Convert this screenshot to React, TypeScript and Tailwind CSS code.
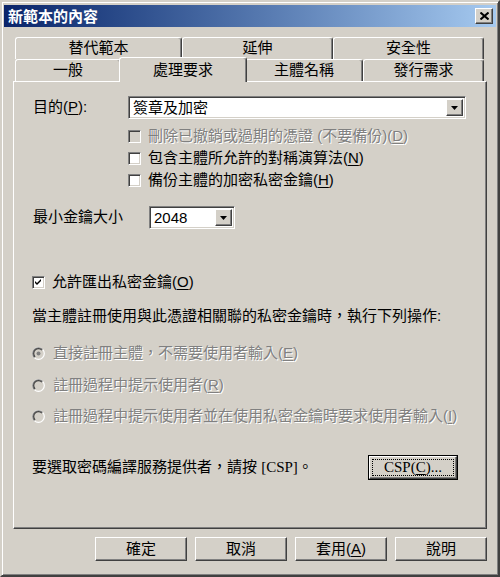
import React from "react";

const raised =
  "border border-t-white border-l-white border-r-[#404040] border-b-[#404040] shadow-[inset_-1px_-1px_#808080]";
const sunken =
  "border border-t-[#808080] border-l-[#808080] border-r-white border-b-white shadow-[inset_1px_1px_#404040,inset_-1px_-1px_#d4d0c8]";
const grayText = "text-[#808080] [text-shadow:1px_1px_0_#ffffff]";

function U({ children }: { children: React.ReactNode }) {
  return <span className="underline underline-offset-2">{children}</span>;
}

function CheckBox({ checked = false, disabled = false }: { checked?: boolean; disabled?: boolean }) {
  return (
    <span
      className={`w-[13px] h-[13px] shrink-0 flex items-center justify-center ${sunken} ${
        disabled ? "bg-[#d4d0c8]" : "bg-white"
      }`}
    >
      {checked && (
        <svg width="7" height="7" viewBox="0 0 7 7">
          <path d="M0 2 L2 4 L6 0 L6 2 L2 6 L0 4 Z" fill="#000" />
        </svg>
      )}
    </span>
  );
}

function Radio({ selected = false }: { selected?: boolean }) {
  return (
    <svg width="13" height="13" viewBox="0 0 13 13" className="shrink-0">
      <circle cx="6.5" cy="6.5" r="5.8" fill="#d4d0c8" stroke="#ffffff" strokeWidth="1.2" />
      <path d="M2.4 10.6 A5.8 5.8 0 0 1 10.6 2.4" fill="none" stroke="#808080" strokeWidth="1.2" />
      <path d="M3.1 9.9 A4.8 4.8 0 0 1 9.9 3.1" fill="none" stroke="#404040" strokeWidth="1.2" />
      {selected && <circle cx="6.5" cy="6.5" r="2" fill="#808080" />}
    </svg>
  );
}

function DropArrow() {
  return (
    <span className={`w-[17px] h-full bg-[#d4d0c8] flex items-center justify-center ${raised}`}>
      <svg width="7" height="4" viewBox="0 0 7 4">
        <path d="M0 0 H7 L3.5 4 Z" fill="#000" />
      </svg>
    </span>
  );
}

function Combo({ value, width }: { value: string; width: string }) {
  return (
    <div className={`${width} h-[23px] bg-white flex items-stretch p-[2px] ${sunken}`}>
      <span className="flex-1 pl-[2px] leading-[17px] text-[15px]">{value}</span>
      <DropArrow />
    </div>
  );
}

function Tab({ label, w, selected = false }: { label: string; w: string; selected?: boolean }) {
  return (
    <div
      className={`${w} ${
        selected ? "h-[25px] -mt-[2px] -mx-[2px] relative z-10 border-b-0" : "h-[22px]"
      } bg-[#d4d0c8] border-t border-l border-t-white border-l-white border-r border-r-[#404040] rounded-t-[3px] shadow-[inset_-1px_0_#808080] flex items-center justify-center text-[15px] shrink-0`}
    >
      {label}
    </div>
  );
}

function Button({ label }: { label: React.ReactNode }) {
  return (
    <button className={`w-[92px] h-[24px] bg-[#d4d0c8] text-[15px] flex items-center justify-center ${raised}`}>
      {label}
    </button>
  );
}

export default function App() {
  return (
    <div className="w-[500px] h-[577px] bg-[#d4d0c8] border-2 border-t-[#d4d0c8] border-l-[#d4d0c8] border-r-[#404040] border-b-[#404040] shadow-[inset_1px_1px_#fff,inset_-1px_-1px_#808080] p-[2px] pt-[3px] font-['Liberation_Sans','Noto_Sans_CJK_TC',sans-serif] text-black flex flex-col overflow-hidden">
      {/* title bar */}
      <div className="h-[22px] bg-gradient-to-r from-[#0a246a] to-[#a6caf0] flex items-center justify-between pl-[4px] pr-[3px]">
        <span className="text-white font-bold text-[15px] leading-none">新範本的內容</span>
        <span className={`w-[18px] h-[16px] bg-[#d4d0c8] flex items-center justify-center ${raised}`}>
          <svg width="9" height="8" viewBox="0 0 9 8">
            <path d="M0.5 0.5 L8.5 7.5 M8.5 0.5 L0.5 7.5" stroke="#000" strokeWidth="2" />
          </svg>
        </span>
      </div>

      {/* tabs */}
      <div className="mt-[10px] pl-[11px] flex flex-col">
        <div className="flex">
          <Tab label="替代範本" w="w-[167px]" />
          <Tab label="延伸" w="w-[151px]" />
          <Tab label="安全性" w="w-[151px]" />
        </div>
        <div className="flex">
          <Tab label="一般" w="w-[106px]" />
          <Tab label="處理要求" w="w-[128px]" selected />
          <Tab label="主體名稱" w="w-[118px]" />
          <Tab label="發行需求" w="w-[121px]" />
        </div>
      </div>

      {/* panel */}
      <div className="-mt-[1px] ml-[9px] w-[474px] h-[448px] border border-t-white border-l-white border-r-[#404040] border-b-[#404040] shadow-[inset_-1px_-1px_#808080] flex flex-col pl-[18px] text-[15px]">
        <div className="mt-[14px] h-[23px] flex items-center">
          <span className="w-[96px] pl-[1px]">
            目的(<U>P</U>):
          </span>
          <Combo value="簽章及加密" width="w-[338px]" />
        </div>

        <div className="mt-[6px] flex flex-col pl-[96px]">
          <div className="h-[22px] flex items-center gap-[7px]">
            <CheckBox disabled />
            <span className={grayText}>
              刪除已撤銷或過期的憑證 (不要備份)(<U>D</U>)
            </span>
          </div>
          <div className="h-[22px] flex items-center gap-[7px]">
            <CheckBox />
            <span>
              包含主體所允許的對稱演算法(<U>N</U>)
            </span>
          </div>
          <div className="h-[22px] flex items-center gap-[7px]">
            <CheckBox />
            <span>
              備份主體的加密私密金鑰(<U>H</U>)
            </span>
          </div>
        </div>

        <div className="mt-[15px] h-[23px] flex items-center">
          <span className="w-[117px] pl-[1px]">最小金鑰大小</span>
          <Combo value="2048" width="w-[86px]" />
        </div>

        <div className="mt-[42px] h-[22px] flex items-center gap-[7px]">
          <CheckBox checked />
          <span>
            允許匯出私密金鑰(<U>O</U>)
          </span>
        </div>

        <div className="mt-[12px] h-[22px] flex items-center">
          當主體註冊使用與此憑證相關聯的私密金鑰時，執行下列操作:
        </div>

        <div className="mt-[15px] h-[22px] flex items-center gap-[8px]">
          <Radio selected />
          <span className={grayText}>
            直接註冊主體，不需要使用者輸入(<U>E</U>)
          </span>
        </div>
        <div className="mt-[10px] h-[22px] flex items-center gap-[8px]">
          <Radio />
          <span className={grayText}>
            註冊過程中提示使用者(<U>R</U>)
          </span>
        </div>
        <div className="mt-[9px] h-[22px] flex items-center gap-[8px]">
          <Radio />
          <span className={grayText}>
            註冊過程中提示使用者並在使用私密金鑰時要求使用者輸入(<U>I</U>)
          </span>
        </div>

        <div className="mt-[28px] h-[25px] flex items-center justify-between pr-[28px]">
          <span>
            要選取密碼編譯服務提供者，請按 <span className="font-['Liberation_Serif',serif]">[CSP]</span>。
          </span>
          <button className="w-[90px] h-[25px] border border-black bg-[#d4d0c8] flex">
            <span className={`flex-1 flex items-center justify-center p-[2px] ${raised}`}>
              <span className="w-full h-full border border-dotted border-black flex items-center justify-center font-['Liberation_Serif',serif] text-[15px]">
                CSP(<U>C</U>)...
              </span>
            </span>
          </button>
        </div>
      </div>

      {/* buttons */}
      <div className="mt-[8px] flex justify-end gap-[8px] pr-[9px]">
        <Button label="確定" />
        <Button label="取消" />
        <Button
          label={
            <span>
              套用(<U>A</U>)
            </span>
          }
        />
        <Button label="說明" />
      </div>
    </div>
  );
}
